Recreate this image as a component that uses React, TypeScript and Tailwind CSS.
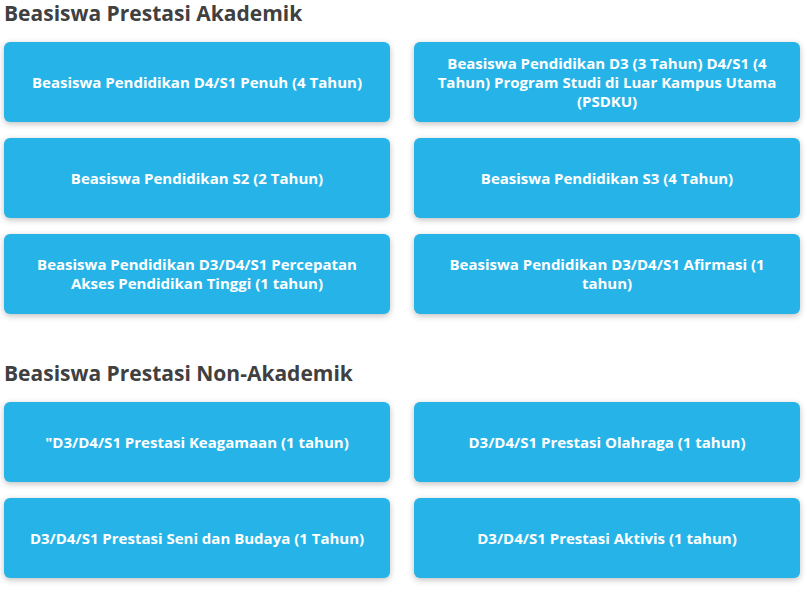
const akademik = [
  'Beasiswa Pendidikan D4/S1 Penuh (4 Tahun)',
  'Beasiswa Pendidikan D3 (3 Tahun) D4/S1 (4 Tahun) Program Studi di Luar Kampus Utama (PSDKU)',
  'Beasiswa Pendidikan S2 (2 Tahun)',
  'Beasiswa Pendidikan S3 (4 Tahun)',
  'Beasiswa Pendidikan D3/D4/S1 Percepatan Akses Pendidikan Tinggi (1 tahun)',
  'Beasiswa Pendidikan D3/D4/S1 Afirmasi (1 tahun)',
];

const nonAkademik = [
  '"D3/D4/S1 Prestasi Keagamaan (1 tahun)',
  'D3/D4/S1 Prestasi Olahraga (1 tahun)',
  'D3/D4/S1 Prestasi Seni dan Budaya (1 Tahun)',
  'D3/D4/S1 Prestasi Aktivis (1 tahun)',
];

function Card({ label }: { label: string }) {
  return (
    <button className="h-20 rounded-md bg-[#26b4e8] px-5 text-center text-[15px] font-bold leading-[19px] text-white shadow-[0_2px_6px_rgba(0,0,0,0.25)]">
      {label}
    </button>
  );
}

function Section({ title, items }: { title: string; items: string[] }) {
  return (
    <section>
      <h2 className="text-[21px] font-bold leading-[26px] text-[#404040]">{title}</h2>
      <div className="mt-4 grid grid-cols-2 gap-x-6 gap-y-4">
        {items.map((t) => (
          <Card key={t} label={t} />
        ))}
      </div>
    </section>
  );
}

export default function App() {
  return (
    <div className="min-h-screen bg-white font-['Open_Sans',sans-serif]">
      <div className="w-[804px] px-1">
        <Section title="Beasiswa Prestasi Akademik" items={akademik} />
        <div className="mt-[46px]">
          <Section title="Beasiswa Prestasi Non-Akademik" items={nonAkademik} />
        </div>
      </div>
    </div>
  );
}
